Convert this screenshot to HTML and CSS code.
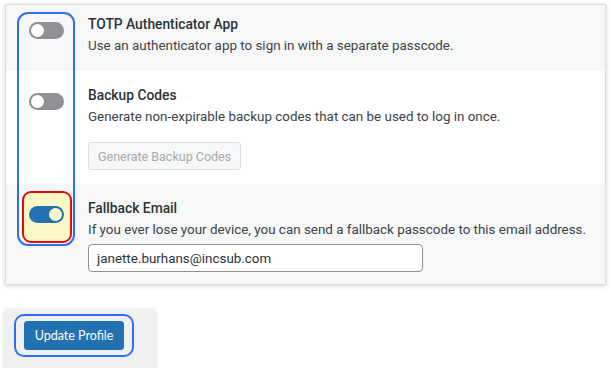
FILE: index.html
```html
<!DOCTYPE html>
<html>
<head>
<meta charset="utf-8">
<title>Two-factor settings</title>
<link rel="stylesheet" href="styles.css">
</head>
<body>
<div class="panel">
    <div class="mark_group"></div>
    <div class="row row_alt row_first">
        <div class="toggle_cell">
            <span class="toggle"><span class="knob"></span></span>
        </div>
        <div class="row_body">
            <div class="row_title">TOTP Authenticator App</div>
            <div class="row_desc">Use an authenticator app to sign in with a separate passcode.</div>
        </div>
    </div>
    <div class="row">
        <div class="toggle_cell">
            <span class="toggle"><span class="knob"></span></span>
        </div>
        <div class="row_body">
            <div class="row_title">Backup Codes</div>
            <div class="row_desc">Generate non-expirable backup codes that can be used to log in once.</div>
            <button class="btn_secondary" disabled>Generate Backup Codes</button>
        </div>
    </div>
    <div class="row row_alt">
        <div class="toggle_cell mark_single">
            <span class="toggle toggle_on"><span class="knob"></span></span>
        </div>
        <div class="row_body">
            <div class="row_title">Fallback Email</div>
            <div class="row_desc">If you ever lose your device, you can send a fallback passcode to this email address.</div>
            <input class="text_input" type="text" value="janette.burhans@incsub.com">
        </div>
    </div>
</div>
<div class="submit_box">
    <span class="mark_button"><button class="btn_primary">Update Profile</button></span>
</div>
</body>
</html>
```

FILE: styles.css
```css
body {
    margin: 0;
    background-color: #fff;
    font-family: Roboto, "Liberation Sans", sans-serif;
    font-size: 13.4px;
    color: #3c434a;
}
.panel {
    position: relative;
    width: 599px;
    margin: 4px 0 0 5px;
    border: 1px solid #dcdcde;
    box-shadow: 0 1px 4px rgba(0, 0, 0, 0.18);
}
.row {
    display: flex;
    padding: 13px 0 14px 0;
    background-color: #fff;
}
.row_alt {
    background-color: #f6f7f7;
    padding-bottom: 12px;
}
.row_first {
    padding-top: 8px;
    padding-bottom: 14px;
}
.toggle_cell {
    width: 82px;
    padding: 9px 0 0 23px;
    box-sizing: border-box;
    flex-shrink: 0;
}
.toggle {
    display: block;
    position: relative;
    width: 35px;
    height: 17px;
    border-radius: 9px;
    background-color: #8f9194;
}
.knob {
    position: absolute;
    top: 2px;
    left: 2px;
    width: 13px;
    height: 13px;
    border-radius: 50%;
    background-color: #fff;
}
.toggle_on {
    background-color: #2271b1;
}
.toggle_on .knob {
    left: auto;
    right: 2px;
    background-color: #fbf7cb;
}
.mark_single {
    position: relative;
}
.mark_single::before {
    content: "";
    position: absolute;
    left: 16px;
    top: -6px;
    width: 46px;
    height: 48px;
    border: 2px solid #e30b12;
    border-radius: 9px;
    background-color: #fbf8c6;
}
.mark_group {
    position: absolute;
    left: 11px;
    top: 7px;
    width: 54px;
    height: 230px;
    border: 2.5px solid #2f6ff4;
    border-radius: 11px;
    z-index: 2;
    pointer-events: none;
}
.row_body {
    flex: 1;
}
.row_title {
    font-size: 13.8px;
    font-weight: 500;
    line-height: 22px;
    color: #2c3338;
}
.row_desc {
    line-height: 22px;
}
.btn_secondary {
    display: block;
    margin-top: 14px;
    height: 28px;
    padding: 0 9px;
    font-family: Roboto, "Liberation Sans", sans-serif;
    font-size: 12.5px;
    color: #a7aaad;
    background-color: #f6f7f7;
    border: 1px solid #dcdcde;
    border-radius: 3px;
}
.text_input {
    display: block;
    margin-top: 3px;
    width: 335px;
    height: 28px;
    box-sizing: border-box;
    padding: 0 8px;
    font-family: Roboto, "Liberation Sans", sans-serif;
    font-size: 13.4px;
    color: #2c3338;
    background-color: #fff;
    border: 1px solid #8c8f94;
    border-radius: 4px;
}
.submit_box {
    display: flex;
    align-items: flex-start;
    width: 150px;
    height: 59px;
    margin: 24px 0 0 5px;
    padding: 5px 0 0 9px;
    box-sizing: border-box;
    background-color: #f0f0f1;
    box-shadow: 0 1px 4px rgba(0, 0, 0, 0.2);
}
.mark_button {
    display: block;
    padding: 5px 8px;
    border: 2px solid #2f6ff4;
    border-radius: 10px;
}
.btn_primary {
    display: block;
    width: 100px;
    height: 29px;
    padding: 0;
    font-family: Lato, "Liberation Sans", sans-serif;
    font-size: 12.5px;
    color: #fff;
    background-color: #2271b1;
    border: 1px solid #2271b1;
    border-radius: 3px;
}
```
